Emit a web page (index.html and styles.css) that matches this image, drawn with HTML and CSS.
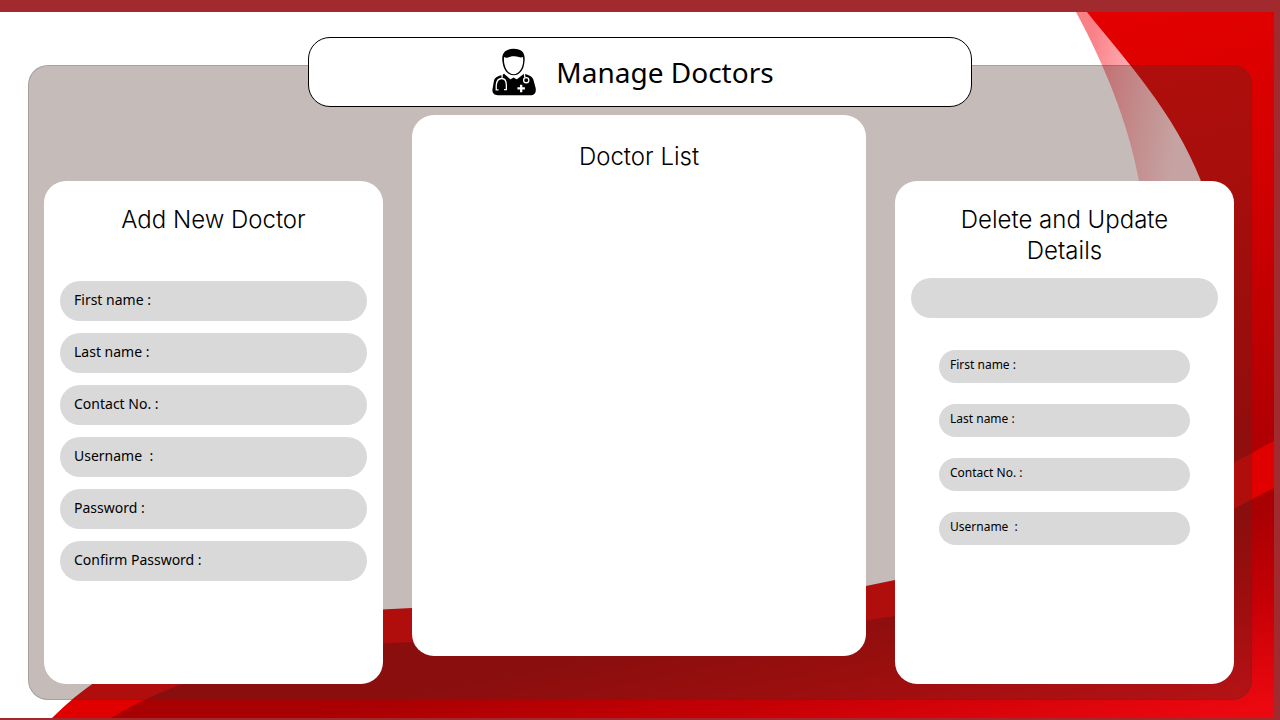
FILE: index.html
```html
<!DOCTYPE html>
<html lang="en">
<head>
<meta charset="utf-8">
<meta name="viewport" content="width=device-width, initial-scale=1">
<title>Manage Doctors</title>
<link rel="stylesheet" href="styles.css">
</head>
<body>
<div class="page">
  <svg class="backdrop" viewBox="0 12 1274 706" preserveAspectRatio="none" aria-hidden="true">
    <defs>
      <linearGradient id="upper" gradientUnits="userSpaceOnUse" x1="1150" y1="20" x2="1260" y2="440">
        <stop offset="0" stop-color="#e20000"/>
        <stop offset="0.35" stop-color="#d60000"/>
        <stop offset="1" stop-color="#b00003"/>
      </linearGradient>
      <linearGradient id="lower" gradientUnits="userSpaceOnUse" x1="1260" y1="510" x2="1300" y2="698">
        <stop offset="0" stop-color="#a80003"/>
        <stop offset="0.45" stop-color="#c40005"/>
        <stop offset="1" stop-color="#ec080f"/>
      </linearGradient>
      <linearGradient id="ribbon" gradientUnits="userSpaceOnUse" x1="1088" y1="60" x2="1186" y2="75">
        <stop offset="0" stop-color="#f98087"/>
        <stop offset="0.35" stop-color="#fda5aa"/>
        <stop offset="1" stop-color="#ffdcdd"/>
      </linearGradient>
    </defs>
    <path fill="url(#ribbon)" d="M1076 12C1105 66 1128 122 1139 181C1144 215 1145 240 1144 260L1230 260L1210 160L1100 12Z"/>
    <path fill="url(#upper)" d="M1087 12C1127 62 1174 112 1201 181C1224 240 1230 340 1200 490L1274 460V12Z"/>
    <path fill="#e00000" d="M52 718C150 620 280 614 412 608C570 607 720 610 866 586L895 580C1040 550 1150 508 1235 462L1274 441V718Z"/>
    <path fill="url(#lower)" d="M111 718C185 674 285 647 412 642C570 637 720 643 895 616C1040 595 1150 553 1235 508L1274 488V718Z"/>
  </svg>

  <main class="board">
    <header class="title">
      <svg class="doctor" viewBox="20 17 135 144" aria-hidden="true">
        <path d="M53 62C47 35 57 18 86 18C115 18 124 34 119 62C117 83 104 99 86 99C69 99 56 83 53 62Z"/>
        <path fill="#fff" d="M57 43C66 49 75 40 87 41C98 40 106 47 115 43C119 70 106 95 86 96C67 95 54 70 57 43Z"/>
        <path d="M49 99L57 94L86 120L118 94C134 98 145 102 148 116L154 139C156 153 150 160 137 160H38C25 160 19 151 22 139L26 116C29 105 38 102 49 99Z"/>
        <path d="M76 112L86 106L97 112L89 124H83Z"/>
        <g fill="none" stroke="#fff" stroke-width="4">
          <path d="M51 94V107M40 144H33V130C34 116 40 109 50 109C59 109 64 117 64 130V143H57"/>
          <path d="M119 92L121 106"/>
          <circle cx="125" cy="114" r="8"/>
        </g>
        <path fill="#fff" d="M106 128H113V136H121V143H113V151H106V143H98V136H106Z"/>
      </svg>
      <h1>Manage Doctors</h1>
    </header>

    <div class="columns">
      <section class="card">
        <h2>Add New Doctor</h2>
        <form class="fields">
          <div class="field"><label for="first">First name :</label><input id="first" type="text"></div>
          <div class="field"><label for="last">Last name :</label><input id="last" type="text"></div>
          <div class="field"><label for="contact">Contact No. :</label><input id="contact" type="tel"></div>
          <div class="field"><label for="user">Username&nbsp; :</label><input id="user" type="text"></div>
          <div class="field"><label for="pass">Password :</label><input id="pass" type="password"></div>
          <div class="field"><label for="confirm">Confirm Password :</label><input id="confirm" type="password"></div>
        </form>
      </section>

      <section class="card list">
        <h2>Doctor List</h2>
      </section>

      <section class="card">
        <h2>Delete and Update Details</h2>
        <form class="update">
          <input class="search" type="search" aria-label="Doctor">
          <div class="fields small">
            <div class="field"><label for="u-first">First name :</label><input id="u-first" type="text"></div>
            <div class="field"><label for="u-last">Last name :</label><input id="u-last" type="text"></div>
            <div class="field"><label for="u-contact">Contact No. :</label><input id="u-contact" type="tel"></div>
            <div class="field"><label for="u-user">Username&nbsp; :</label><input id="u-user" type="text"></div>
          </div>
        </form>
      </section>
    </div>
  </main>
</div>
</body>
</html>
```
FILE: styles.css
```css
* { box-sizing: border-box; }

body {
  margin: 0;
  color: #000;
  font-family: "Noto Sans", "Open Sans", sans-serif;
}

.page {
  position: relative;
  display: flex;
  min-height: 100vh;
  padding: 53px 22px 18px 28px;
  border: solid #a02a2d;
  border-width: 12px 6px 2px 0;
  background: #fff;
}

.backdrop {
  position: absolute;
  inset: 0;
  width: 100%;
  height: 100%;
}

.board {
  position: relative;
  flex: 1;
  display: flex;
  flex-direction: column;
  min-width: 0;
  padding: 0 17px 15px 15px;
  border: 1px solid rgba(40, 50, 60, 0.2);
  border-radius: 20px;
  background: rgba(74, 44, 38, 0.32);
}

.title {
  display: flex;
  align-items: center;
  justify-content: center;
  gap: 20px;
  height: 70px;
  margin: -29px 262px 8px 264px;
  padding-right: 14px;
  border: 1px solid #000;
  border-radius: 22px;
  background: #fff;
}

.doctor {
  width: 44px;
  height: 48px;
}

h1, h2 {
  margin: 0;
  font-weight: 400;
}

h1 {
  font-size: 28px;
  line-height: 40px;
}

h2 {
  padding: 0 40px;
  font-family: Inter, "Open Sans", sans-serif;
  font-size: 24px;
  font-weight: 300;
  line-height: 31px;
  text-align: center;
}

.columns {
  flex: 1;
  display: grid;
  grid-template-columns: minmax(0, 339fr) minmax(0, 454fr) minmax(0, 339fr);
  gap: 29px;
}

.card {
  margin-top: 66px;
  padding: 23px 16px;
  border-radius: 22px;
  background: #fff;
}

.list {
  margin: 0 0 28px;
  padding-top: 26px;
}

.fields {
  display: flex;
  flex-direction: column;
  gap: 12px;
  margin-top: 46px;
}

.field {
  display: flex;
  height: 40px;
  padding: 0 14px;
  border-radius: 20px;
  background: #d9d9d9;
  font-size: 14px;
  line-height: 38px;
}

.field label { white-space: nowrap; }

input {
  flex: 1;
  min-width: 0;
  border: 0;
  outline: 0;
  background: transparent;
  font: inherit;
}

.search {
  display: block;
  width: 100%;
  height: 40px;
  margin-top: 12px;
  padding: 0 14px;
  border-radius: 20px;
  background: #d9d9d9;
}

.small {
  gap: 21px;
  margin: 32px 28px 0;
}

.small .field {
  height: 33px;
  padding: 0 11px;
  font-size: 12px;
  line-height: 30px;
}

@media (max-width: 900px) {
  .title { margin-right: 0; margin-left: 0; }
  .columns { grid-template-columns: minmax(0, 1fr); }
  .card, .list { margin: 0; }
}
```
